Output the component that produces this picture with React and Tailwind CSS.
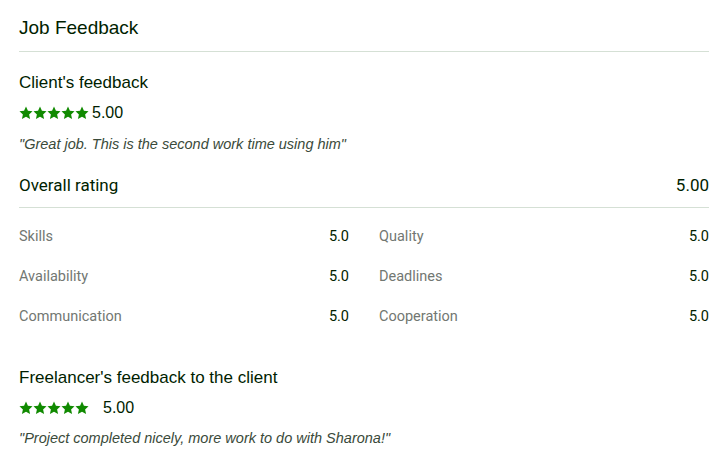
const Stars = () => (
  <div className="flex items-center">
    {[0, 1, 2, 3, 4].map((i) => (
      <svg key={i} viewBox="0 0 24 24" className="w-[14px] h-[14px]" fill="#108a00">
        <path d="M12 1l3.3 7.3 7.9.8-5.9 5.4 1.7 7.9L12 18.4l-7 4 1.7-7.9L.8 9.1l7.9-.8z" />
      </svg>
    ))}
  </div>
);

const scores = [
  ['Skills', '5.0', 'Quality', '5.0'],
  ['Availability', '5.0', 'Deadlines', '5.0'],
  ['Communication', '5.0', 'Cooperation', '5.0'],
];

const sans = { fontFamily: '"Liberation Sans", Arial, sans-serif' };

export default function App() {
  return (
    <div className="bg-white w-[726px] h-[453px] overflow-hidden pl-[19px] pr-[17px] text-[#001e00]" style={{ fontFamily: 'Roboto, "Liberation Sans", sans-serif' }}>
      <div className="h-[52px] flex items-center pt-[4px] border-b border-[#d5e0d5]" style={sans}>
        <h1 className="text-[19px] leading-none">Job Feedback</h1>
      </div>

      <div style={sans}>
        <h2 className="text-[17px] h-[20px] leading-[20px] mt-[21px]">Client's feedback</h2>
        <div className="flex items-center gap-[3px] h-[20px] mt-[10px]">
          <Stars />
          <span className="text-[16px] leading-none">5.00</span>
        </div>
        <p className="italic text-[14.5px] h-[20px] leading-[20px] mt-[11px] text-[#3a4a3a]">"Great job. This is the second work time using him"</p>
      </div>

      <div className="flex items-center justify-between h-[20px] mt-[21px] pb-[12px] border-b border-[#d5e0d5] box-content">
        <span className="text-[17px] leading-none">Overall rating</span>
        <span className="text-[17px] leading-none">5.00</span>
      </div>

      <div className="flex flex-col mt-[9px]">
        {scores.map(([a, av, b, bv]) => (
          <div key={a} className="grid grid-cols-2 gap-x-[30px] h-[40px] items-center">
            <div className="flex justify-between text-[14.5px]">
              <span className="text-[#727772]">{a}</span>
              <span>{av}</span>
            </div>
            <div className="flex justify-between text-[14.5px]">
              <span className="text-[#727772]">{b}</span>
              <span>{bv}</span>
            </div>
          </div>
        ))}
      </div>

      <div style={sans}>
        <h2 className="text-[17px] h-[20px] leading-[20px] mt-[31px]">Freelancer's feedback to the client</h2>
        <div className="flex items-center gap-[14px] h-[20px] mt-[10px]">
          <Stars />
          <span className="text-[16px] leading-none">5.00</span>
        </div>
        <p className="italic text-[14.5px] h-[20px] leading-[20px] mt-[10px] text-[#3a4a3a]">"Project completed nicely, more work to do with Sharona!"</p>
      </div>
    </div>
  );
}
